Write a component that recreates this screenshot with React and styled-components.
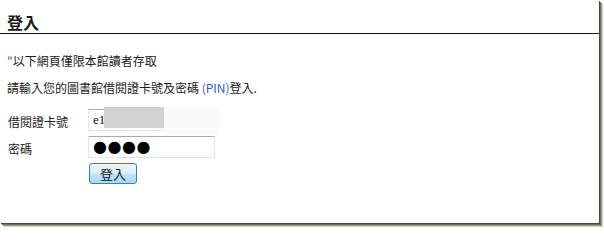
import styled, { createGlobalStyle } from "styled-components";

const GlobalStyle = createGlobalStyle`
  html, body {
    margin: 0;
    padding: 0;
    min-height: 228px;
    background: #ffffff;
  }
`;

const Page = styled.div`
  width: 604px;
  height: 228px;
`;

const Frame = styled.div`
  width: 599px;
  height: 223px;
  background-color: #ffffff;
  box-shadow: 1px 1px 0 #4a4a44, 2px 2px 0 #6e6e62, 3px 3px 0 #9e9e8c,
    4px 4px 0 #cfcfc0;
  font-family: "Noto Sans CJK TC", "Noto Sans", sans-serif;
  color: #1c1c1c;
  overflow: hidden;
`;

const Title = styled.h1`
  margin: 0;
  padding: 12px 7px 0;
  height: 21px;
  font-size: 16px;
  line-height: 20px;
  font-weight: bold;
  color: #1a1a1a;
  border-bottom: 1px solid #111111;
`;

const Body = styled.div`
  padding: 0 7px;
`;

const Line = styled.p`
  margin: ${(p) => p.$top}px 0 0;
  font-size: 12px;
  line-height: 18px;
  white-space: nowrap;
`;

const Blue = styled.span`
  color: #2f5fb8;
`;

const Form = styled.div`
  display: grid;
  grid-template-columns: 81px 127px;
  grid-auto-rows: 22px;
  row-gap: 5px;
  margin-top: 12px;
`;

const Label = styled.div`
  display: flex;
  align-items: center;
  padding: 2px 0 0 1px;
  font-size: 12px;
`;

const FieldWrap = styled.div`
  position: relative;
`;

const Field = styled.div`
  box-sizing: border-box;
  height: 22px;
  display: flex;
  align-items: center;
  padding-left: 4px;
  border: 1px solid #e2e6ec;
  border-top-color: #a9abb2;
  border-radius: 1px;
  background: #ffffff;
  font-family: "Liberation Serif", serif;
  font-size: 13px;
  color: #111111;
`;

const Dots = styled.span`
  font-family: "DejaVu Sans", sans-serif;
  font-size: 16px;
  letter-spacing: 0.5px;
  line-height: 20px;
  color: #000000;
`;

const Mask = styled.div`
  position: absolute;
  left: ${(p) => p.$left}px;
  top: -2px;
  width: ${(p) => p.$w}px;
  height: ${(p) => p.$h}px;
  background: ${(p) => p.$bg};
`;

const Button = styled.button`
  grid-column: 2;
  justify-self: start;
  margin-left: 1px;
  width: 48px;
  height: 21px;
  padding: 0;
  border: 1px solid #3c7fb1;
  border-radius: 3px;
  background: linear-gradient(#eaf6fd 0%, #d9f0fc 50%, #bee6fd 51%, #a7d9f5 100%);
  font-family: "Noto Sans CJK TC", sans-serif;
  font-size: 13px;
  line-height: 18px;
  color: #111111;
`;

export default function App() {
  return (
    <>
      <GlobalStyle />
      <Page>
        <Frame>
          <Title>登入</Title>
          <Body>
            <Line $top={18}>
              <Blue>"</Blue>以下網頁僅限本館讀者存取
            </Line>
            <Line $top={9}>
              請輸入您的圖書館借閱證卡號及密碼 <Blue>(PIN)</Blue>登入.
            </Line>
            <Form>
              <Label>借閱證卡號</Label>
              <FieldWrap>
                <Field>e1</Field>
                <Mask $left={16} $w={60} $h={21} $bg="#d2d2d2" />
                <Mask $left={76} $w={55} $h={28} $bg="#fafafa" />
              </FieldWrap>
              <Label>密碼</Label>
              <Field>
                <Dots>●●●●</Dots>
              </Field>
              <Button>登入</Button>
            </Form>
          </Body>
        </Frame>
      </Page>
    </>
  );
}
